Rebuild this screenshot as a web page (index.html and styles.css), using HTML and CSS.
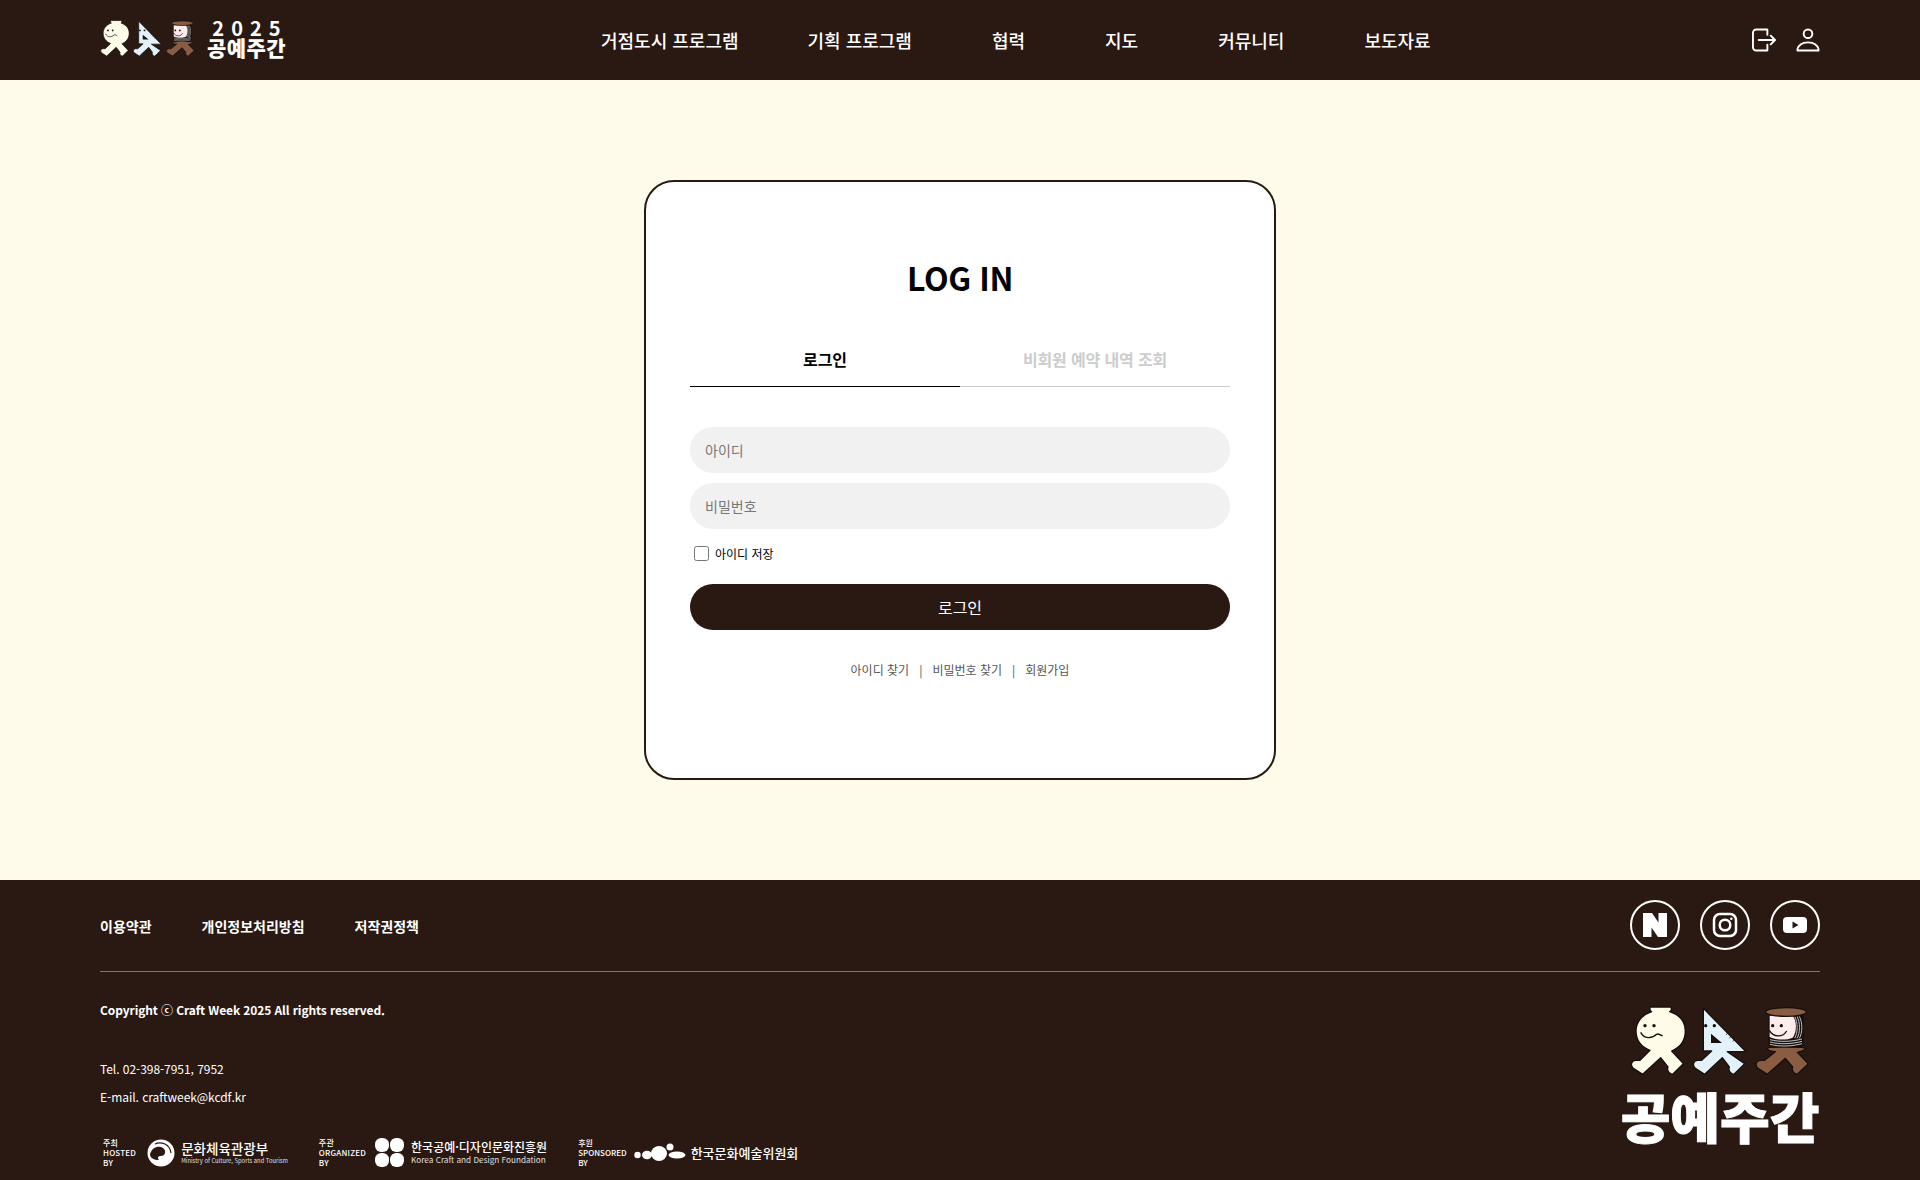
FILE: index.html
```html
<!DOCTYPE html>
<html lang="ko">
<head>
  <meta charset="UTF-8" />
  <meta name="viewport" content="width=device-width, initial-scale=1.0"/>
  <title>로그인 - 공예주간</title>
  <link rel="stylesheet" href="styles.css">
</head>
<body>

<header class="site-header">
  <a href="#" class="logo">
    <svg class="logo-mascots" viewBox="90 45 540 210" aria-hidden="true">
      <defs>
        <g id="mascots" stroke="#15100d" stroke-width="4" stroke-linejoin="round">
          <!-- 항아리 -->
          <path fill="#fffbe9" d="M150 48H214V58L209 62C240 72 256 94 256 120C256 150 238 170 215 180L250 218L218 250C208 250 200 238 204 228L182 200L128 250L100 232C90 222 94 210 106 208H120L150 178C125 168 108 148 108 120C108 94 125 72 155 62L150 58Z"/>
          <circle cx="135" cy="104" r="5" fill="#15100d" stroke="none"/>
          <circle cx="162" cy="104" r="5" fill="#15100d" stroke="none"/>
          <path fill="none" d="M122 124C132 144 155 144 170 130C176 126 182 134 188 134"/>
          <!-- 삼각자 -->
          <path fill="#e3f1fb" d="M310 52L438 182H382L434 218L402 250C392 250 384 238 388 228L367 200L314 250L286 232C276 222 280 210 292 208H305L335 180H310Z"/>
          <path fill="#15100d" stroke="none" d="M333 156L333 128L366 156Z"/>
          <circle cx="317" cy="104" r="5" fill="#15100d" stroke="none"/>
          <circle cx="343" cy="104" r="5" fill="#15100d" stroke="none"/>
          <path fill="none" stroke-width="2" d="M383 126L378 132M393 136L388 142M403 146L398 152"/>
          <!-- 실패 -->
          <path fill="#8a5d43" d="M500 172C515 165 600 165 618 172C612 180 600 182 592 184L625 218L592 250C582 250 574 238 578 228L556 202L502 250L474 232C464 222 468 210 480 208H494L526 182C514 182 504 178 500 172Z"/>
          <rect x="505" y="66" width="106" height="104" rx="14" fill="#15100d" stroke="none"/>
          <path fill="#fdeceb" stroke="none" d="M509 74H578C590 90 592 120 578 140C560 148 530 148 509 138Z"/>
          <path fill="none" stroke="#e4e1de" stroke-width="2.500" d="M584 76C594 95 594 125 584 142M591 76C601 95 601 125 591 142M598 76C608 95 608 125 598 142M510 146C540 154 575 152 606 144M510 153C540 161 575 159 606 151M510 160C540 168 575 166 606 158"/>
          <ellipse cx="558" cy="63" rx="61" ry="13" fill="#8a5d43"/>
          <circle cx="518" cy="104" r="5" fill="#15100d" stroke="none"/>
          <circle cx="544" cy="104" r="5" fill="#15100d" stroke="none"/>
          <path fill="none" d="M508 118C520 140 548 140 560 120"/>
        </g>
      </defs>
      <use href="#mascots"/>
    </svg>
    <span class="logo-text"><span class="logo-year">2025</span><span class="logo-name">공예주간</span></span>
  </a>

  <nav class="main-nav">
    <a href="#">거점도시 프로그램</a>
    <a href="#">기획 프로그램</a>
    <a href="#">협력</a>
    <a href="#">지도</a>
    <a href="#">커뮤니티</a>
    <a href="#">보도자료</a>
  </nav>

  <div class="header-icons">
    <a href="#" aria-label="로그인">
      <svg viewBox="0 0 25 24" fill="none" stroke="#fff" stroke-width="2" stroke-linecap="round" stroke-linejoin="round">
        <path d="M16 6.5V1H4.5A3.5 3.5 0 0 0 1 4.500V19.500A3.500 3.500 0 0 0 4.500 23H16V17"/>
        <path d="M7 12H23.500M19.500 7.500L24 12L19.500 16.500"/>
      </svg>
    </a>
    <a href="#" aria-label="마이페이지">
      <svg viewBox="0 0 25 24" fill="none" stroke="#fff" stroke-width="2" stroke-linejoin="round">
        <circle cx="12.500" cy="5.500" r="4.500"/>
        <path d="M1.500 23C1.500 17.500 6.500 14.500 12.500 14.500S23.500 17.500 23.500 23Z"/>
      </svg>
    </a>
  </div>
</header>

<main class="login-page">
  <div class="login-box">
    <h1>LOG IN</h1>

    <div class="tabs">
      <a href="#" class="tab active">로그인</a>
      <a href="#" class="tab">비회원 예약 내역 조회</a>
    </div>

    <form class="login-form">
      <input type="text" placeholder="아이디" />
      <input type="password" placeholder="비밀번호" />
      <label class="save-id"><input type="checkbox" /> 아이디 저장</label>
      <button type="button">로그인</button>
    </form>

    <div class="find-links">
      <a href="#">아이디 찾기</a>
      <span>|</span>
      <a href="#">비밀번호 찾기</a>
      <span>|</span>
      <a href="#">회원가입</a>
    </div>
  </div>
</main>

<footer class="site-footer">
  <div class="footer-top">
    <div class="footer-links">
      <a href="#">이용약관</a>
      <a href="#">개인정보처리방침</a>
      <a href="#">저작권정책</a>
    </div>
    <div class="social">
      <a href="#" aria-label="네이버 블로그">
        <svg viewBox="0 0 26 26"><path fill="#fff" d="M1 1H10L16.500 10.500V1H25V25H16L9.500 15.500V25H1Z"/></svg>
      </a>
      <a href="#" aria-label="인스타그램">
        <svg viewBox="0 0 26 26" fill="none" stroke="#fff" stroke-width="2.500">
          <rect x="2" y="2" width="22" height="22" rx="6"/>
          <circle cx="13" cy="13" r="5.300"/>
          <circle cx="19.300" cy="6.700" r="1.300" fill="#fff" stroke="none"/>
        </svg>
      </a>
      <a href="#" aria-label="유튜브">
        <svg viewBox="0 0 26 26">
          <rect x="1" y="5" width="24" height="16" rx="4" fill="#fff"/>
          <path fill="#2a1912" d="M10.500 9.500L16.500 13L10.500 16.500Z"/>
        </svg>
      </a>
    </div>
  </div>

  <div class="footer-bottom">
    <div class="footer-info">
      <p class="copyright">Copyright ⓒ Craft Week 2025 All rights reserved.</p>
      <p class="contact">Tel. 02-398-7951, 7952</p>
      <p class="contact">E-mail. craftweek@kcdf.kr</p>

      <div class="partners">
        <div class="partner partner-mcst">
          <p class="partner-label">주최<br>HOSTED<br>BY</p>
          <svg class="emblem-mcst" viewBox="0 0 28 28">
            <circle cx="14" cy="14" r="13.500" fill="#fff"/>
            <path fill="#2a1912" d="M3 15C5 8 12 6 16 9C20 12 18 17 14 17C11 17 10 19 12 21C7 21 3 19 3 15Z"/>
            <path fill="none" stroke="#2a1912" stroke-width="1.200" d="M8 5C14 2 23 5 24 14"/>
          </svg>
          <div class="partner-name">
            <strong class="name-mcst">문화체육관광부</strong>
            <small class="sub-mcst">Ministry of Culture, Sports and Tourism</small>
          </div>
        </div>

        <div class="partner partner-kcdf">
          <p class="partner-label">주관<br>ORGANIZED<br>BY</p>
          <svg class="emblem-kcdf" viewBox="0 0 30 30" fill="#fff">
            <rect x="1" y="1" width="13.500" height="13.500" rx="6"/>
            <rect x="15.500" y="1" width="13.500" height="13.500" rx="6"/>
            <rect x="1" y="15.500" width="13.500" height="13.500" rx="6"/>
            <rect x="15.500" y="15.500" width="13.500" height="13.500" rx="6"/>
          </svg>
          <div class="partner-name">
            <strong class="name-kcdf">한국공예·디자인문화진흥원</strong>
            <small class="sub-kcdf">Korea Craft and Design Foundation</small>
          </div>
        </div>

        <div class="partner partner-arko">
          <p class="partner-label">후원<br>SPONSORED<br>BY</p>
          <svg class="emblem-arko" viewBox="0 0 52 20" fill="#fff">
            <circle cx="3.500" cy="12" r="3.200"/>
            <ellipse cx="13" cy="12" rx="5" ry="4.200"/>
            <ellipse cx="25" cy="10.500" rx="8" ry="7.500"/>
            <circle cx="36" cy="4" r="3.500"/>
            <ellipse cx="43" cy="12" rx="8.500" ry="3.500"/>
          </svg>
          <strong class="name-arko">한국문화예술위원회</strong>
        </div>
      </div>
    </div>

    <div class="footer-logo">
      <svg viewBox="90 45 540 210" aria-hidden="true"><use href="#mascots"/></svg>
      <span>공예주간</span>
    </div>
  </div>
</footer>

</body>
</html>
```

FILE: styles.css
```css
* {
  box-sizing: border-box;
}

body {
  margin: 0;
  font-family: "Noto Sans CJK KR", "Noto Sans", sans-serif;
  background-color: #fffbea;
  color: #000;
}

a {
  color: inherit;
  text-decoration: none;
}

p {
  margin: 0;
}

/* header */
.site-header {
  display: flex;
  align-items: center;
  height: 80px;
  padding: 0 100px;
  background-color: #2a1912;
  color: #fff;
}

.logo {
  display: flex;
  align-items: center;
  gap: 12px;
  width: 185px;
  margin-bottom: 4px;
}

.logo-mascots {
  width: 95px;
  height: 37px;
  flex: none;
}

.logo-text {
  display: flex;
  flex-direction: column;
  align-items: center;
}

.logo-year {
  font-size: 20px;
  line-height: 18px;
  font-weight: 700;
  letter-spacing: 7px;
  margin-right: -7px;
}

.logo-name {
  font-size: 21px;
  line-height: 20px;
  font-weight: 900;
  white-space: nowrap;
  letter-spacing: 0.400px;
}

.main-nav {
  display: flex;
  gap: 80px;
  margin-left: 316px;
  font-size: 18px;
  font-weight: 500;
  white-space: nowrap;
}

.main-nav a:first-child {
  margin-right: -11px;
}

.header-icons {
  display: flex;
  gap: 20px;
  margin-left: auto;
}

.header-icons a {
  display: block;
  width: 24px;
  height: 24px;
}

.header-icons svg {
  display: block;
  width: 100%;
  height: 100%;
}

/* login */
.login-page {
  padding: 100px 0;
}

.login-box {
  width: 632px;
  height: 600px;
  margin: 0 auto;
  padding: 71px 44px 0;
  background: #fff;
  border: 2px solid #2a1912;
  border-radius: 30px;
}

.login-box h1 {
  margin: 0;
  font-size: 32px;
  line-height: 48px;
  font-weight: 700;
  letter-spacing: -0.400px;
  text-align: center;
}

.tabs {
  display: flex;
  margin-top: 31px;
}

.tab {
  flex: 1;
  height: 55px;
  font-size: 16px;
  line-height: 54px;
  font-weight: 700;
  letter-spacing: -0.150px;
  text-align: center;
  color: #ccc;
  border-bottom: 1px solid #ccc;
}

.tab.active {
  color: #000;
  letter-spacing: 0;
  border-bottom-color: #000;
}

.login-form {
  display: flex;
  flex-direction: column;
  margin-top: 40px;
}

.login-form input[type="text"],
.login-form input[type="password"] {
  height: 46px;
  margin-bottom: 10px;
  padding: 0 15px;
  border: none;
  border-radius: 23px;
  background: #f1f1f1;
  font-family: inherit;
  font-size: 14px;
}

.login-form input::placeholder {
  color: #777;
}

.save-id {
  display: flex;
  align-items: center;
  gap: 6px;
  height: 20px;
  margin: 4px 0 21px 4px;
  font-size: 12px;
}

.save-id input {
  width: 15px;
  height: 15px;
  margin: 0;
}

.login-form button {
  height: 46px;
  border: none;
  border-radius: 23px;
  background-color: #2a1912;
  color: #fff;
  font-family: inherit;
  font-size: 16px;
  cursor: pointer;
}

.find-links {
  display: flex;
  justify-content: center;
  gap: 10px;
  margin-top: 30px;
  font-size: 12px;
  line-height: 20px;
  color: #555;
}

/* footer */
.site-footer {
  height: 300px;
  padding: 20px 100px 0;
  background-color: #2a1912;
  color: #fff;
  overflow: hidden;
}

.footer-top {
  display: flex;
  justify-content: space-between;
  align-items: center;
  padding-bottom: 21px;
  border-bottom: 1px solid rgba(255,255,255,0.4);
}

.footer-links {
  display: flex;
  gap: 50px;
  font-size: 14px;
  font-weight: 700;
  padding-top: 2px;
}

.social {
  display: flex;
  gap: 20px;
}

.social a {
  display: flex;
  justify-content: center;
  align-items: center;
  width: 50px;
  height: 50px;
  border: 2px solid #fff;
  border-radius: 50%;
}

.social svg {
  width: 26px;
  height: 26px;
}

.footer-bottom {
  display: flex;
  justify-content: space-between;
}

.footer-info {
  padding-top: 28px;
}

.copyright {
  font-size: 12px;
  line-height: 20px;
  font-weight: 700;
  letter-spacing: -0.100px;
  margin-bottom: 39px;
}

.contact {
  font-size: 12px;
  line-height: 20px;
  letter-spacing: -0.050px;
  margin-bottom: 8px;
}

.partners {
  display: flex;
  align-items: center;
  gap: 31px;
  margin-top: 30px;
  margin-left: 3px;
}

.partner {
  display: flex;
  align-items: center;
  gap: 8px;
}

.partner-label {
  font-size: 8px;
  line-height: 10px;
  font-weight: 500;
  letter-spacing: 0.200px;
}

.partner-mcst .partner-label {
  margin-right: 3px;
}

.partner-mcst .emblem-mcst {
  margin-right: -2px;
}

.partner-kcdf .emblem-kcdf {
  margin-right: -2px;
}

.partner-arko .partner-label {
  letter-spacing: 0;
  margin-right: -1px;
}

.partner-arko .emblem-arko {
  margin-right: -3px;
}

.partner-name {
  display: flex;
  flex-direction: column;
  gap: 1px;
}

.partner-name strong,
.name-arko {
  font-weight: 500;
  line-height: 1.200;
  white-space: nowrap;
}

.partner-name small {
  line-height: 1.200;
  white-space: nowrap;
  opacity: 0.85;
}

.name-mcst {
  font-size: 13.500px;
}

.sub-mcst {
  font-size: 5.800px;
}

.name-kcdf {
  font-size: 12px;
}

.sub-kcdf {
  font-size: 8.200px;
}

.name-arko {
  font-size: 13px;
}

.emblem-mcst {
  width: 28px;
  height: 28px;
}

.emblem-kcdf {
  width: 31px;
  height: 31px;
}

.emblem-arko {
  width: 52px;
  height: 20px;
}

.footer-logo {
  display: flex;
  flex-direction: column;
  align-items: center;
  width: 200px;
  padding-top: 34px;
}

.footer-logo svg {
  width: 180px;
  height: 70px;
}

.footer-logo span {
  margin-top: 5px;
  font-size: 54px;
  line-height: 70px;
  font-weight: 900;
  white-space: nowrap;
  -webkit-text-stroke: 1px #fff;
}
```
